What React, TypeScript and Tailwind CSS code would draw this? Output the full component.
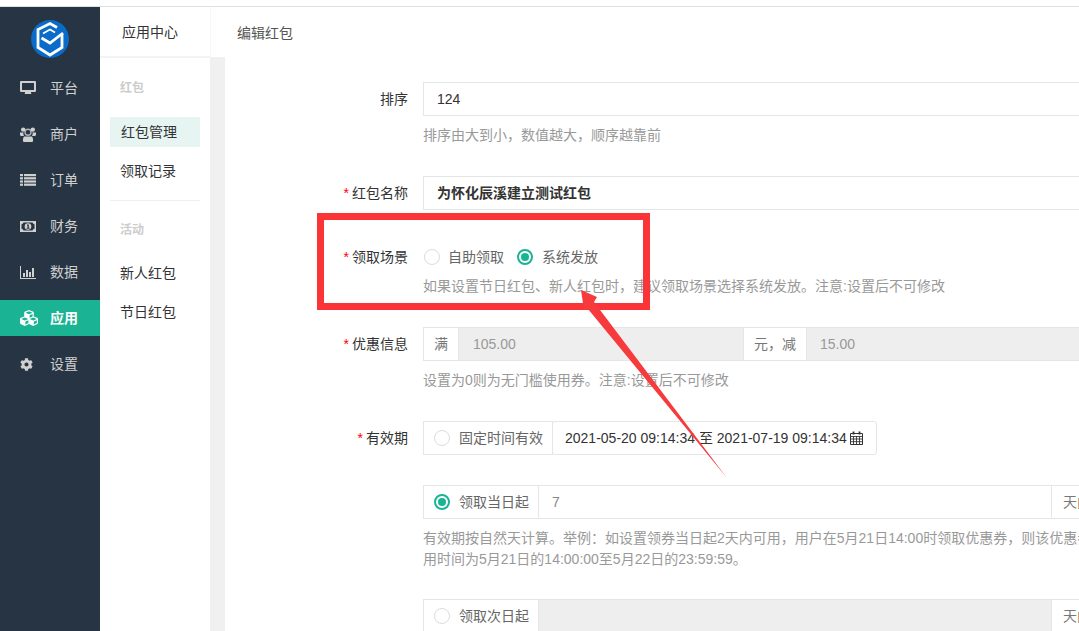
import { FaCubes, FaCog } from "react-icons/fa";
import type { ReactNode } from "react";

const font = "font-['Liberation_Sans','Noto_Sans_CJK_SC',sans-serif]";

// font-awesome 4 style glyphs, redrawn since the icon package only has the newer shapes
function DesktopIcon() {
  return (
    <svg width="16" height="14" viewBox="0 0 16 14" fill="currentColor">
      <path fillRule="evenodd" d="M0 1a1 1 0 0 1 1-1h14a1 1 0 0 1 1 1v9a1 1 0 0 1-1 1H1a1 1 0 0 1-1-1zM2 2v7h12V2z" />
      <path d="M5 11h6v1.5l1 .5H4l1-.5z" />
    </svg>
  );
}

function UsersIcon() {
  return (
    <svg width="16" height="15" viewBox="0 0 16 15" fill="currentColor">
      <circle cx="3.2" cy="2.6" r="2.2" />
      <circle cx="12.8" cy="2.6" r="2.2" />
      <path d="M0 5.5h3.5a4 4 0 0 0 .5 3.5H1.5Q0 9 0 7.5zM16 5.5h-3.5a4 4 0 0 1-.5 3.5h2.5Q16 9 16 7.5z" />
      <circle cx="8" cy="5.3" r="3" fill="none" stroke="currentColor" strokeWidth="1.4" strokeOpacity=".8" />
      <path d="M4 9.6h8l1 2V14a1 1 0 0 1-1 1H4a1 1 0 0 1-1-1v-2.4z" />
    </svg>
  );
}

function ListIcon() {
  return (
    <svg width="16" height="12" viewBox="0 0 16 12" fill="currentColor">
      {[0, 3.2, 6.4, 9.6].map((y) => (
        <g key={y}>
          <rect x="0" y={y} width="3" height="2.2" />
          <rect x="4" y={y} width="12" height="2.2" />
        </g>
      ))}
    </svg>
  );
}

function MoneyIcon() {
  return (
    <svg width="16" height="11" viewBox="0 0 16 11" fill="currentColor">
      <path fillRule="evenodd" d="M0 0h16v11H0zM3.5 1.5 Q3 3 1.5 3.3v4.4Q3 8 3.5 9.5h9Q13 8 14.5 7.7V3.3Q13 3 12.500 1.5z" />
      <circle cx="8" cy="5.500" r="3.300" />
      <path d="M7 3.500h1.800v3.200h.8v1H6.700v-1h.8V4.800H7z" fill="#263443" />
    </svg>
  );
}

function ChartIcon() {
  return (
    <svg width="16" height="13" viewBox="0 0 16 13" fill="currentColor">
      <path d="M0 0h1v12h15v1H0z" />
      <rect x="3" y="7" width="2" height="4" />
      <rect x="6" y="4" width="2" height="7" />
      <rect x="9" y="6" width="2" height="5" />
      <rect x="12" y="2" width="2" height="9" />
    </svg>
  );
}

function CalendarIcon() {
  return (
    <svg width="13" height="14" viewBox="0 0 13 14" fill="none" stroke="currentColor">
      <path d="M.5 2.500h12v11H.5z" />
      <path d="M.5 5.500h12M.5 8h12M.5 10.700h12M3.500 5.500v8M6.500 5.500v8M9.500 5.500v8" strokeWidth=".9" />
      <path d="M3.500 0.500v3M9.500 0.500v3" strokeWidth="1.800" />
    </svg>
  );
}

const navItems = [
  { label: "平台", icon: <DesktopIcon /> },
  { label: "商户", icon: <UsersIcon /> },
  { label: "订单", icon: <ListIcon /> },
  { label: "财务", icon: <MoneyIcon /> },
  { label: "数据", icon: <ChartIcon /> },
  { label: "应用", icon: <FaCubes size={18} />, active: true },
  { label: "设置", icon: <FaCog size={13} /> },
];

function Logo() {
  return (
    <svg width="38" height="38" viewBox="0 0 38 38">
      <circle cx="19" cy="19" r="19" fill="#0a6bc9" />
      <path d="M26 7.500 L19 3.500 L7 9.500 V27.500 L19 35 L31 27.500 V14" fill="none" stroke="#fff" strokeWidth="2.800" />
      <path d="M10.500 18 L19 23 L32 13" fill="none" stroke="#fff" strokeWidth="2.800" />
      <path d="M12 13.500 L19 9.500 L24 12.500" fill="none" stroke="#fff" strokeWidth="1.800" />
    </svg>
  );
}

function Radio({ checked }: { checked?: boolean }) {
  return (
    <span className={`flex h-4 w-4 shrink-0 items-center justify-center rounded-full ${checked ? "border-2 border-[#1ab394]" : "border border-[#dcdcdc]"}`}>
      {checked && <span className="h-2 w-2 rounded-full bg-[#1ab394]" />}
    </span>
  );
}

function Row({ label, required, children, className = "" }: { label?: string; required?: boolean; children: ReactNode; className?: string }) {
  return (
    <div className={`flex ${className}`}>
      <label className="flex h-[34px] w-[183px] shrink-0 items-center justify-end text-[14px] text-[#333]">
        {required && <span className="mr-[3px] text-[#f00]">*</span>}
        {label}
      </label>
      <div className="ml-[15px] w-[724px] shrink-0">{children}</div>
    </div>
  );
}

function Help({ children, className = "mt-[9px]" }: { children: ReactNode; className?: string }) {
  return <p className={`text-[14px] leading-[21px] text-[#999] ${className}`}>{children}</p>;
}

function Addon({ children, className = "" }: { children: ReactNode; className?: string }) {
  return <span className={`flex h-full shrink-0 items-center border-[#e5e6e7] text-[14px] text-[#777] ${className}`}>{children}</span>;
}

export default function App() {
  return (
    <div className={`flex h-[631px] w-[1079px] flex-col overflow-hidden bg-white ${font}`}>
      <div className="h-[7px] shrink-0 border-b border-[#e0e0e0]" />
      <div className="flex min-h-0 flex-1">
        <aside className="flex w-[100px] shrink-0 flex-col bg-[#263443]">
          <div className="flex h-[63px] shrink-0 items-start justify-center pt-[13px]">
            <Logo />
          </div>
          <nav className="flex flex-col gap-[10px]">
            {navItems.map((item) => (
              <div key={item.label} className={`flex h-9 items-center text-[14px] ${item.active ? "bg-[#1ab394] font-bold text-white" : "text-[#d0d0d0]"}`}>
                <span className="flex w-[50px] justify-start pl-5">{item.icon}</span>
                <span>{item.label}</span>
              </div>
            ))}
          </nav>
        </aside>
        <aside className="flex w-[110px] shrink-0 flex-col">
          <div className="flex h-[51px] shrink-0 items-center border-b-2 border-[#f3f3f3] pl-[22px] pt-[2px] text-[14px] text-[#333]">应用中心</div>
          <div className="px-[10px]">
            <div className="flex h-[59px] items-center pl-[10px] text-[12px] font-bold text-[#ccc]">红包</div>
            <div className="flex h-[30px] items-center bg-[#e6f5f2] pl-[11px] text-[14px] text-[#333]">红包管理</div>
            <div className="mt-[9px] flex h-[30px] items-center pl-[10px] text-[14px] text-[#333]">领取记录</div>
            <div className="mt-[14px] border-t border-[#f0f0f0]" />
            <div className="flex h-[57px] items-center pl-[10px] text-[12px] font-bold text-[#ccc]">活动</div>
            <div className="flex h-[30px] items-center pl-[10px] text-[14px] text-[#333]">新人红包</div>
            <div className="mt-[9px] flex h-[30px] items-center pl-[10px] text-[14px] text-[#333]">节日红包</div>
          </div>
        </aside>
        <main className="flex min-w-0 flex-1 flex-col">
          <div className="flex h-[50px] shrink-0 items-center border-l border-[#f8f8f8] pl-[26px] pt-[2px] text-[14px] text-[#555]">编辑红包</div>
          <div className="flex min-h-0 flex-1">
            <div className="w-[15px] shrink-0 bg-[#f0f0f0]" />
            <form className="min-w-0 flex-1 pt-[25px]">
              <Row label="排序">
                <div className="flex h-[34px] items-center border border-[#e5e6e7] pl-[13px] text-[14px] text-[#333]">124</div>
                <Help>排序由大到小，数值越大，顺序越靠前</Help>
              </Row>
              <Row label="红包名称" required className="mt-[30px]">
                <div className="flex h-[34px] items-center border border-[#e5e6e7] pl-[13px] text-[14px] font-bold text-[#333]">为怀化辰溪建立测试红包</div>
              </Row>
              <Row label="领取场景" required className="mt-[30px]">
                <div className="flex h-[34px] items-center text-[14px] text-[#666]">
                  <span className="ml-px"><Radio /></span>
                  <span className="ml-2">自助领取</span>
                  <span className="ml-[13px]"><Radio checked /></span>
                  <span className="ml-[9px]">系统发放</span>
                </div>
                <Help className="mt-[2px]">如果设置节日红包、新人红包时，建议领取场景选择系统发放。注意:设置后不可修改</Help>
              </Row>
              <Row label="优惠信息" required className="mt-[30px]">
                <div className="flex h-[34px] border border-[#e5e6e7] text-[14px] text-[#999]">
                  <Addon className="w-[35px] justify-center border-r">满</Addon>
                  <div className="flex w-[284px] items-center bg-[#eee] pl-[14px]">105.00</div>
                  <Addon className="w-[64px] justify-center border-x">元，减</Addon>
                  <div className="flex flex-1 items-center bg-[#eee] pl-[13px]">15.00</div>
                </div>
                <Help>设置为0则为无门槛使用券。注意:设置后不可修改</Help>
              </Row>
              <Row label="有效期" required className="mt-[30px]">
                <div className="flex h-[34px] items-center">
                  <div className="flex h-full w-[130px] items-center gap-[9px] border border-[#e5e6e7] pl-[10px] text-[14px] text-[#666]">
                    <Radio />
                    <span>固定时间有效</span>
                  </div>
                  <div className="-ml-px flex h-full w-[325px] items-center gap-[3px] rounded-[3px] border border-[#e5e6e7] pl-[12px] text-[14px] text-[#333]">
                    <span>2021-05-20 09:14:34 至 2021-07-19 09:14:34</span>
                    <CalendarIcon />
                  </div>
                </div>
                <div className="mt-[30px] flex h-[34px] border border-[#e5e6e7] text-[14px]">
                  <div className="flex w-[115px] shrink-0 items-center gap-[9px] border-r border-[#e5e6e7] pl-[10px] text-[#666]">
                    <Radio checked />
                    <span>领取当日起</span>
                  </div>
                  <div className="flex w-[512px] items-center pl-[13px] text-[#888]">7</div>
                  <Addon className="border-l pl-[11px]">天内可用</Addon>
                </div>
                <Help>有效期按自然天计算。举例：如设置领券当日起2天内可用，用户在5月21日14:00时领取优惠券，则该优惠券的可使用时间为5月21日的14:00:00至5月22日的23:59:59。</Help>
                <div className="mt-[29px] flex h-[34px] border border-[#e5e6e7] text-[14px]">
                  <div className="flex w-[115px] shrink-0 items-center gap-[9px] border-r border-[#e5e6e7] pl-[10px] text-[#666]">
                    <Radio />
                    <span>领取次日起</span>
                  </div>
                  <div className="w-[512px] bg-[#eee]" />
                  <Addon className="border-l pl-[11px]">天内可用</Addon>
                </div>
              </Row>
            </form>
          </div>
        </main>
      </div>
      {/* annotation drawn on top of the screenshot */}
      <div className="pointer-events-none absolute left-[317px] top-[213px] h-[97px] w-[333px] border-[7px] border-[#fb3438]" />
      <svg className="pointer-events-none absolute left-0 top-0" width="1079" height="631">
        <path d="M581 290 L597 297 L594 302 L727 478 L588 309 L584 310 Z" fill="#f73a3c" />
      </svg>
    </div>
  );
}
